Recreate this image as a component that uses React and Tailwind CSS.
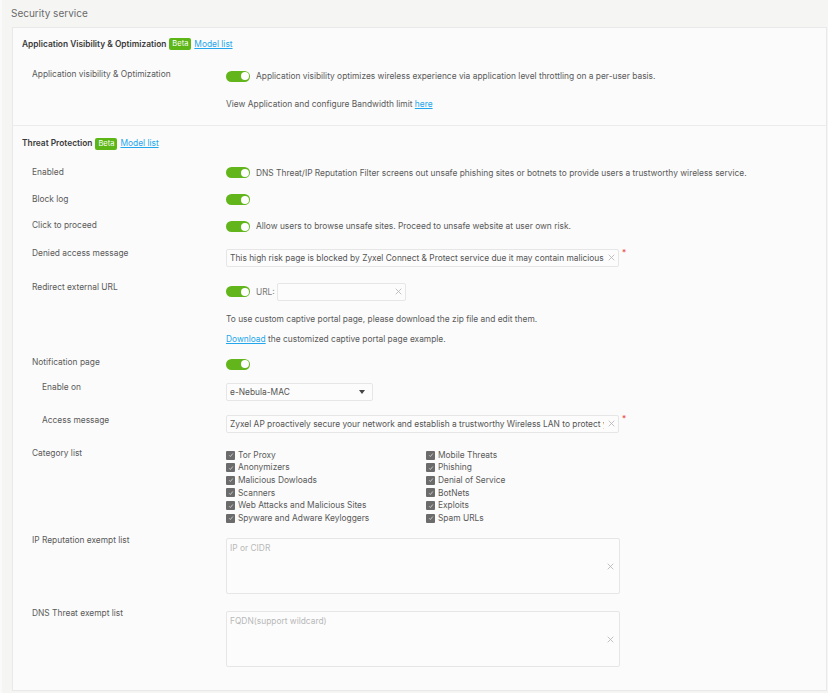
import React from 'react';

const Toggle = () => (
  <span className="relative inline-block w-[24px] h-[11px] rounded-full bg-[#62b61c] shrink-0">
    <span className="absolute right-[1.5px] top-[1.5px] w-[8px] h-[8px] rounded-full bg-white"></span>
  </span>
);

const Badge = () => (
  <span className="inline-flex items-center px-[3px] h-[12px] rounded-[2px] bg-[#5cb615] text-white text-[7.5px] leading-none">Beta</span>
);

const Clear = () => (
  <svg className="w-[7px] h-[7px] text-[#b5b5b5] shrink-0" viewBox="0 0 10 10" fill="none" stroke="currentColor" strokeWidth="1.2">
    <path d="M1 1l8 8M9 1l-8 8" />
  </svg>
);

const Check = ({ label }) => (
  <div className="flex items-center h-[12.6px] gap-[3px]">
    <span className="w-[9px] h-[9px] bg-[#6b6b6b] rounded-[1px] flex items-center justify-center">
      <svg className="w-[6px] h-[6px]" viewBox="0 0 10 10" fill="none" stroke="#d8d8d8" strokeWidth="1.4">
        <path d="M2 5.5l2 2 4-5" />
      </svg>
    </span>
    <span>{label}</span>
  </div>
);

const Row = ({ label, indent, className = '', children }) => (
  <div className={`flex ${className}`}>
    <div className={`w-[194px] shrink-0 leading-[12px] text-[#5a5a5a] ${indent ? 'pl-[10px]' : ''}`}>{label}</div>
    <div className="flex-1 min-w-0">{children}</div>
  </div>
);

const TextInput = ({ value, className = '' }) => (
  <div className={`flex items-center h-[18px] border border-[#e6e6e6] rounded-[2px] bg-[#fcfcfc] px-[3px] gap-[4px] ${className}`}>
    <span className="flex-1 overflow-hidden whitespace-nowrap text-[#555]">{value}</span>
    <Clear />
  </div>
);

const leftCats = ['Tor Proxy', 'Anonymizers', 'Malicious Dowloads', 'Scanners', 'Web Attacks and Malicious Sites', 'Spyware and Adware Keyloggers'];
const rightCats = ['Mobile Threats', 'Phishing', 'Denial of Service', 'BotNets', 'Exploits', 'Spam URLs'];

export default function App() {
  return (
    <div className="w-[828px] h-[693px] overflow-hidden bg-[#f5f6f4] border-l-2 border-[#fafafa] text-[8.4px] text-[#5a5a5a]" style={{ fontFamily: 'Inter, "Noto Sans", sans-serif' }}>
      <div className="h-[27px] flex items-center pl-[9px] text-[10px] text-[#6a6a6a]">Security service</div>

      <div className="ml-[10px] w-[815px] bg-[#fbfbfb] border border-[#e9e9e9]">
        {/* Application Visibility */}
        <section className="pt-[10px] pb-[15px] border-b border-[#ececec]">
          <div className="flex items-center gap-[3px] pl-[9px] h-[12px]">
            <span className="font-semibold text-[#3a3a3a]">Application Visibility &amp; Optimization</span>
            <Badge />
            <a className="text-[#22a7ec] underline">Model list</a>
          </div>
          <div className="pl-[19px]">
            <Row label="Application visibility & Optimization" className="mt-[18px]">
              <div className="flex items-center gap-[6px] mt-[2px]">
                <Toggle />
                <span>Application visibility optimizes wireless experience via application level throttling on a per-user basis.</span>
              </div>
              <div className="mt-[15px] leading-[12px]">
                View Application and configure Bandwidth limit <a className="text-[#22a7ec] underline">here</a>
              </div>
            </Row>
          </div>
        </section>

        {/* Threat Protection */}
        <section className="pt-[12px] pb-[23px]">
          <div className="flex items-center gap-[3px] pl-[9px] h-[12px]">
            <span className="font-semibold text-[#3a3a3a]">Threat Protection</span>
            <Badge />
            <a className="text-[#22a7ec] underline">Model list</a>
          </div>
          <div className="pl-[19px]">
            <Row label="Enabled" className="mt-[16px]">
              <div className="flex items-center gap-[6px] mt-[1px]">
                <Toggle />
                <span>DNS Threat/IP Reputation Filter screens out unsafe phishing sites or botnets to provide users a trustworthy wireless service.</span>
              </div>
            </Row>
            <Row label="Block log" className="mt-[14px]">
              <div className="flex items-center mt-[1px]"><Toggle /></div>
            </Row>
            <Row label="Click to proceed" className="mt-[14px]">
              <div className="flex items-center gap-[6px] mt-[1px]">
                <Toggle />
                <span>Allow users to browse unsafe sites. Proceed to unsafe website at user own risk.</span>
              </div>
            </Row>
            <Row label="Denied access message" className="mt-[14px]">
              <div className="flex items-start mt-[2px]">
                <TextInput className="w-[393px]" value="This high risk page is blocked by Zyxel Connect & Protect service due it may contain malicious content." />
                <span className="ml-[3px] text-[#f04848] leading-none">*</span>
              </div>
            </Row>
            <Row label="Redirect external URL" className="mt-[14px]">
              <div className="flex items-center gap-[6px] mt-[2px]">
                <Toggle />
                <span className="text-[#777]">URL:</span>
                <TextInput className="w-[129px] -ml-[4px]" value="" />
              </div>
              <div className="mt-[12px] leading-[12px]">To use custom captive portal page, please download the zip file and edit them.</div>
              <div className="mt-[8px] leading-[12px]">
                <a className="text-[#22a7ec] underline">Download</a> the customized captive portal page example.
              </div>
            </Row>
            <Row label="Notification page" className="mt-[11px]">
              <div className="flex items-center mt-[3px]"><Toggle /></div>
            </Row>
            <Row label="Enable on" indent className="mt-[11px]">
              <div className="flex items-center justify-between w-[147px] h-[18px] mt-[2px] border border-[#e6e6e6] rounded-[2px] bg-[#fcfcfc] pl-[3px] pr-[7px]">
                <span className="text-[#555]">e-Nebula-MAC</span>
                <svg className="w-[6px] h-[4px]" viewBox="0 0 6 4"><path d="M0 0h6L3 4z" fill="#444" /></svg>
              </div>
            </Row>
            <Row label="Access message" indent className="mt-[13px]">
              <div className="flex items-start mt-[1px]">
                <TextInput className="w-[393px]" value="Zyxel AP proactively secure your network and establish a trustworthy Wireless LAN to protect your devices." />
                <span className="ml-[3px] text-[#f04848] leading-none">*</span>
              </div>
            </Row>
            <Row label="Category list" className="mt-[14px]">
              <div className="flex mt-[2px]">
                <div className="w-[200px]">
                  {leftCats.map((c) => <Check key={c} label={c} />)}
                </div>
                <div>
                  {rightCats.map((c) => <Check key={c} label={c} />)}
                </div>
              </div>
            </Row>
            <Row label="IP Reputation exempt list" className="mt-[10px]">
              <div className="relative w-[394px] h-[56px] mt-[4px] border border-[#e6e6e6] rounded-[2px] bg-[#fcfcfc] px-[3px] pt-[3px]">
                <span className="text-[#b8b8b8]">IP or CIDR</span>
                <span className="absolute right-[5px] top-[24px]"><Clear /></span>
              </div>
            </Row>
            <Row label="DNS Threat exempt list" className="mt-[13px]">
              <div className="relative w-[394px] h-[56px] mt-[4px] border border-[#e6e6e6] rounded-[2px] bg-[#fcfcfc] px-[3px] pt-[3px]">
                <span className="text-[#b8b8b8]">FQDN(support wildcard)</span>
                <span className="absolute right-[5px] top-[24px]"><Clear /></span>
              </div>
            </Row>
          </div>
        </section>
      </div>
    </div>
  );
}
